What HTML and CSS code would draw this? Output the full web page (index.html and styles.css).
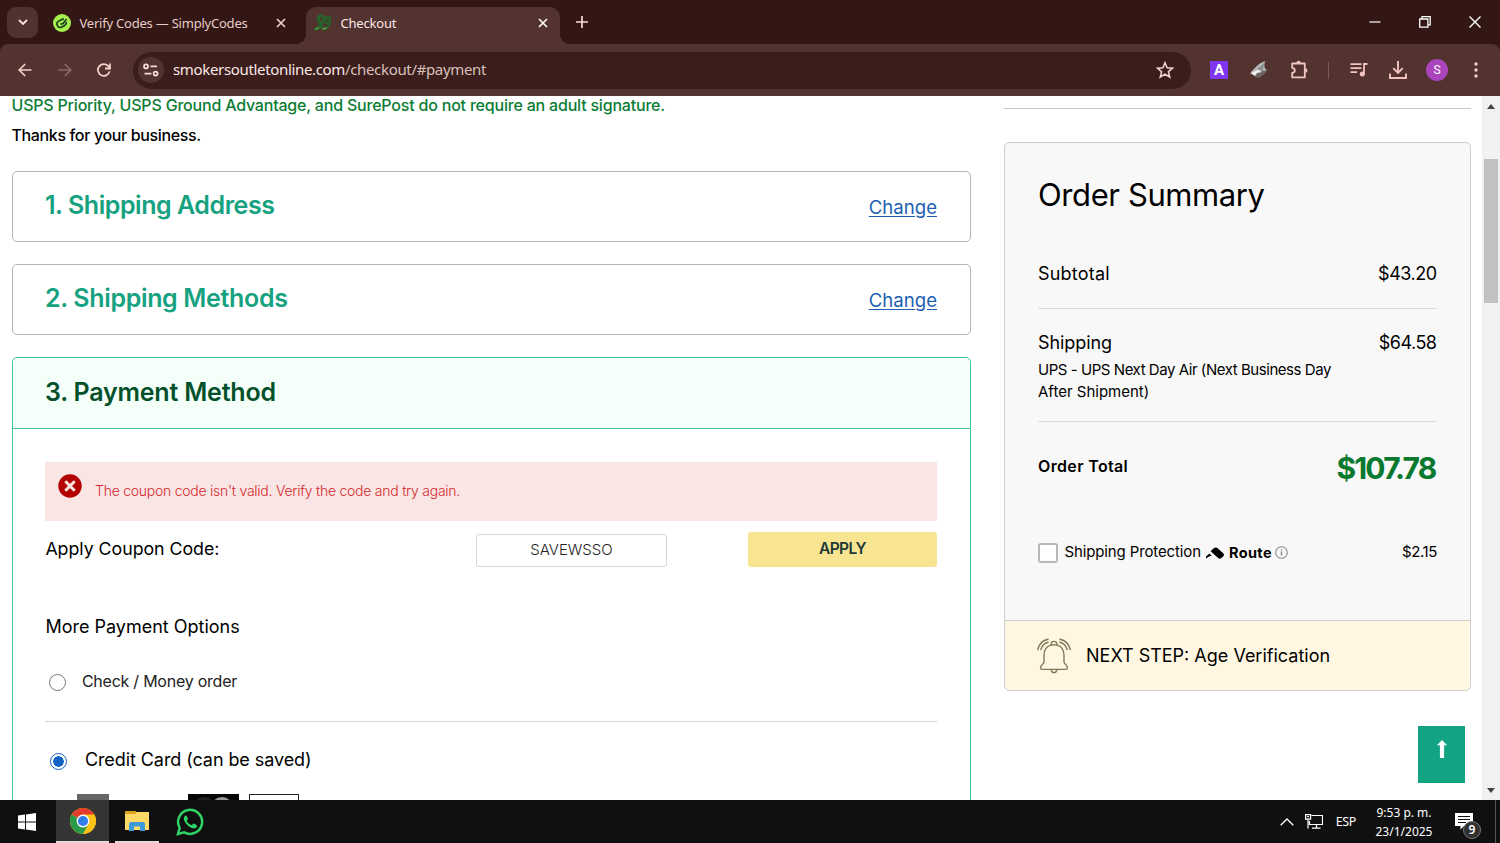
FILE: index.html
```html
<!DOCTYPE html>
<html lang="en">

<head>
  <meta charset="UTF-8" />
  <meta name="viewport" content="width=device-width, initial-scale=1.0" />
  <title>Checkout</title>
  <link rel="stylesheet" href="styles.css">
</head>

<body>

  <!-- Tabs -->
  <div class="tabstrip">
    <button class="tab-search">
      <svg width="12" height="12" viewBox="0 0 12 12"><path d="M2 4l4 4 4-4" fill="none" stroke="#fbe4e1" stroke-width="1.8" /></svg>
    </button>
    <div class="tab">
      <svg width="18" height="18" viewBox="0 0 18 18">
        <circle cx="9" cy="9" r="9" fill="#a6f04d" />
        <g transform="rotate(-28 9 9)" fill="none" stroke="#14391c" stroke-width="1.6">
          <path d="M12.500 6.500Q11.500 5.800 10 5.800H7a3.300 3.300 0 0 0 0 6.600h3.200a3.300 3.300 0 0 0 3-2.400" />
          <path d="M7 9l2.400 1L15 7.600" />
        </g>
      </svg>
      <span class="tab-title first-title">Verify Codes — SimplyCodes</span>
      <svg class="tab-close" width="10" height="10" viewBox="0 0 10 10"><path d="M1 1l8 8M9 1l-8 8" stroke="#f2d5d1" stroke-width="1.6" /></svg>
    </div>
    <div class="tab active">
      <svg width="18" height="18" viewBox="0 0 18 18" fill="none" stroke-linecap="round">
        <path d="M8 2C4 1 3 6 5.500 8s1 6-4 7" stroke="#22662a" stroke-width="3" />
        <path d="M10.500 3c-3 5-4 11-1 12s6.500-5 6.500-9-3-4-4-1 0 4 2 4" stroke="#275f2b" stroke-width="2.6" />
        <path d="M2 15l2-1M9 15l3-1" stroke="#5fa045" stroke-width="1.5" />
      </svg>
      <span class="tab-title">Checkout</span>
      <svg class="tab-close" width="10" height="10" viewBox="0 0 10 10"><path d="M1 1l8 8M9 1l-8 8" stroke="#fff" stroke-width="1.6" /></svg>
    </div>
    <svg class="new-tab" width="12" height="12" viewBox="0 0 12 12"><path d="M6 0v12M0 6h12" stroke="#f7d9d5" stroke-width="1.7" /></svg>
    <div class="window-controls">
      <svg width="12" height="12" viewBox="0 0 12 12"><path d="M0.5 6h11" stroke="#fff" stroke-width="1.2" /></svg>
      <svg width="12" height="12" viewBox="0 0 12 12" fill="none" stroke="#fff" stroke-width="1.3"><path d="M0.7 3h8.2v8.2H0.7zM3 3V0.7h8.2v8.2H9" /></svg>
      <svg width="12" height="12" viewBox="0 0 12 12"><path d="M0.5 0.5l11 11M11.5 0.5l-11 11" stroke="#fff" stroke-width="1.4" /></svg>
    </div>
  </div>

  <!-- Toolbar -->
  <div class="toolbar">
    <div class="nav-buttons">
      <svg width="14" height="14" viewBox="0 0 14 14" fill="none" stroke="#f4cfca" stroke-width="1.7"><path d="M13.5 7H1.5M7.2 1L1.2 7l6 6" /></svg>
      <svg width="14" height="14" viewBox="0 0 14 14" fill="none" stroke="#8c6a66" stroke-width="1.7"><path d="M0.5 7h12M6.8 1l6 6-6 6" /></svg>
      <svg width="14" height="14" viewBox="0 0 14 14" fill="none" stroke="#f4cfca" stroke-width="1.8"><path d="M12.6 8.4A5.9 5.9 0 1 1 11.6 3.4L12.6 4.8M13 0.5v5H8" /></svg>
    </div>
    <div class="address-bar">
      <span class="site-info">
        <svg width="16" height="14" viewBox="0 0 16 14" fill="none" stroke="#f6dcd8" stroke-width="1.7"><circle cx="3" cy="3.4" r="2" /><path d="M7.5 3.4H14M1.5 10.6h7" /><circle cx="12.6" cy="10.6" r="2" /></svg>
      </span>
      <span class="url">smokersoutletonline.com<span class="url-path">/checkout/#payment</span></span>
      <svg class="star" width="18" height="18" viewBox="0 0 18 18"><path d="M9 1.8l2.1 5 5.4.4-4.1 3.5 1.3 5.3L9 13.1 4.3 16l1.3-5.3-4.1-3.5 5.4-.4z" fill="none" stroke="#f0d3cf" stroke-width="1.6" /></svg>
    </div>
    <span class="ext-letter">A</span>
    <svg class="ext-shark" width="18" height="18" viewBox="0 0 18 18">
      <path d="M1 11C5 7 9 2 15 0c-1 4-1 8 2 9l-3 2z" fill="#b9bbba" />
      <path d="M7 8l7-6-1 8z" fill="#8b8e8d" />
      <path d="M4 12l6-2 7-.5-3 4-5 3.5-4-1z" fill="#6b6664" />
      <path d="M0 12l8-3 4 2-5 1-2 3z" fill="#eff0ee" />
    </svg>
    <svg class="puzzle" width="20" height="20" viewBox="0 0 20 20">
      <path d="M3.200 3.500h12.600v13.900H3.200v-4.500q2.600-.4 2.600-2.500T3.200 7.900z" fill="none" stroke="#f1c4bf" stroke-width="1.8" stroke-linejoin="round" />
      <path d="M7.400 3a2.200 2.200 0 0 1 4.400 0zM16.300 8.200a2.200 2.200 0 0 1 0 4.400z" fill="#f1c4bf" />
    </svg>
    <span class="divider"></span>
    <svg class="media" width="18" height="16" viewBox="0 0 18 16"><path d="M0.5 2.2h11M0.5 6.2h11M0.5 10.2h6.5M14 12.3V2h3.5" fill="none" stroke="#f1c4bf" stroke-width="1.8" /><circle cx="12.3" cy="12" r="2.5" fill="#f1c4bf" /></svg>
    <svg class="download" width="18" height="18" viewBox="0 0 18 18" fill="none" stroke="#f1c4bf" stroke-width="1.9"><path d="M9 0v12M4.2 7.2L9 12l4.8-4.8M1 12.5V17h16v-4.5" /></svg>
    <span class="avatar">S</span>
    <svg class="kebab" width="4" height="16" viewBox="0 0 4 16" fill="#f4cfca"><circle cx="2" cy="2" r="1.7" /><circle cx="2" cy="8" r="1.7" /><circle cx="2" cy="14" r="1.7" /></svg>
  </div>

  <!-- Page -->
  <div class="page">
    <div class="steps">
      <p class="notice">USPS Priority, USPS Ground Advantage, and SurePost do not require an adult signature.</p>
      <p class="thanks">Thanks for your business.</p>

      <div class="step">
        <div class="step-head">
          <h2 class="t-address">1. Shipping Address</h2>
          <a href="#">Change</a>
        </div>
      </div>

      <div class="step">
        <div class="step-head">
          <h2 class="t-methods">2. Shipping Methods</h2>
          <a href="#">Change</a>
        </div>
      </div>

      <div class="step current">
        <div class="step-head">
          <h2 class="t-payment">3. Payment Method</h2>
        </div>
        <div class="step-body">
          <div class="alert">
            <svg width="24" height="24" viewBox="0 0 24 24"><circle cx="12" cy="12" r="11.7" fill="#b30000" /><path d="M7.3 7.3l9.4 9.4M16.7 7.3l-9.4 9.4" stroke="#fae5e5" stroke-width="3" /></svg>
            <span>The coupon code isn't valid. Verify the code and try again.</span>
          </div>
          <div class="coupon">
            <label>Apply Coupon Code:</label>
            <input type="text" value="SAVEWSSO" />
            <button>APPLY</button>
          </div>
          <h3>More Payment Options</h3>
          <div class="option check">
            <span class="radio"></span>
            <span>Check / Money order</span>
          </div>
          <div class="option credit">
            <span class="radio checked"></span>
            <span>Credit Card (can be saved)</span>
          </div>
          <div class="cards">
            <span class="card-gray"></span>
            <svg class="card-circles" width="51" height="16" viewBox="0 0 51 16"><rect width="51" height="16" fill="#050505" /><circle cx="16" cy="14" r="11" fill="#222" /><circle cx="34" cy="14" r="11" fill="#9a9a9a" /></svg>
            <span class="card-outline"></span>
          </div>
        </div>
      </div>
    </div>

    <div class="side">
      <div class="summary">
        <h1>Order Summary</h1>
        <div class="row subtotal"><span>Subtotal</span><span class="price">$43.20</span></div>
        <div class="row shipping"><span>Shipping</span><span class="price">$64.58</span></div>
        <p class="carrier"><span class="line-one">UPS - UPS Next Day Air (Next Business Day</span><br>After Shipment)</p>
        <div class="row total"><span>Order Total</span><strong>$107.78</strong></div>
        <div class="row protection">
          <span class="checkbox"></span>
          <span class="label">Shipping Protection</span>
          <svg class="route-mark" width="18" height="12" viewBox="0 0 18 12"><path d="M0 11.500V9.500l3.400-3 2.300 2.200-2.700.9zM4.600 4.200L7.800 1.200Q9.200 0 11 .7l6 5.400q1.500 1.600.6 2.900l-2.400 2.200q-1.500.9-2.800 0z" /></svg>
          <b>Route</b>
          <svg class="info" width="13" height="13" viewBox="0 0 13 13" fill="none" stroke="#8c8c8c"><circle cx="6.5" cy="6.5" r="5.8" stroke-width="1.1" /><path d="M6.5 5.6v4M6.5 3.2v1.4" stroke-width="1.5" /></svg>
          <span class="fee">$2.15</span>
        </div>
        <div class="next-step">
          <svg width="34" height="36" viewBox="0 0 34 36" fill="none" stroke="#85775a" stroke-width="1.4" stroke-linecap="round" stroke-linejoin="round">
            <path d="M13.8 7.2C8.8 8.6 7 12.5 7 17.5v6.3c0 2.500-3.5 3-3.5 6 0 1 .6 1.6 1.5 1.6h24c.9 0 1.5-.6 1.500-1.6 0-3-3.5-3.5-3.500-6v-6.3c0-5-1.8-8.900-6.800-10.300-2-.6-4.400-.6-6.400 0z" />
            <path d="M14 7c0-4.800 6-4.800 6 0M14.2 31.6c.4 4 5.200 4 5.600 0" />
            <path d="M.7 11.500C2 6.500 6 2.200 11 1.200M3.800 11.500C5 8 7.600 5.200 11 4.300M33.300 11.500C32 6.500 28 2.200 23 1.200M30.200 11.500C29 8 26.400 5.200 23 4.300" />
          </svg>
          <span>NEXT STEP: Age Verification</span>
        </div>
      </div>
      <a class="to-top" href="#">
        <svg width="10" height="18" viewBox="0 0 10 18" fill="#fff"><path d="M5 0l5 5.3H7.1V18H2.9V5.3H0z" /></svg>
      </a>
    </div>

    <div class="scrollbar">
      <svg width="8" height="5" viewBox="0 0 8 5"><path d="M0 5l4-5 4 5z" fill="#444" /></svg>
      <span class="thumb"></span>
      <svg width="8" height="5" viewBox="0 0 8 5"><path d="M0 0l4 5 4-5z" fill="#444" /></svg>
    </div>
  </div>

  <!-- Taskbar -->
  <div class="taskbar">
    <div class="task start">
      <svg width="18" height="18" viewBox="0 0 18 18" fill="#fff"><path d="M0 2.500l7-.9v6.900H0zM8 1.400L18 0v8.500H8zM0 9.500h7v6.900l-7-.9zM8 9.500h10V18L8 16.600z" /></svg>
    </div>
    <div class="task chrome">
      <svg width="26" height="26" viewBox="0 0 26 26">
        <circle cx="13" cy="13" r="13" fill="#fbc116" />
        <path d="M13 13L1.75 6.5A13 13 0 0 1 24.25 6.5z" fill="#e33b2e" />
        <path d="M1.75 6.5A13 13 0 0 0 13 26l5.6-9.8L13 13z" fill="#2a9a48" />
        <path d="M13 6.5h11.25A13 13 0 0 1 13 26l5.63-9.75z" fill="#fbc116" />
        <circle cx="13" cy="13" r="6.4" fill="#fff" />
        <circle cx="13" cy="13" r="5.1" fill="#2f7de9" />
      </svg>
    </div>
    <div class="task files">
      <svg width="24" height="20" viewBox="0 0 24 20">
        <path d="M0 0h10l1.5 1H24v18H0z" fill="#ffd966" />
        <path d="M0 0h10l1.5 1.5L10 3H0z" fill="#dda01c" />
        <path d="M4 20v-7q0-2 2-2h12q2 0 2 2v7h-5v-4.5H9V20z" fill="#3c9ad8" />
      </svg>
    </div>
    <div class="task">
      <svg width="28" height="28" viewBox="0 0 28 28">
        <path d="M2 26l1.7-6.2A12 12 0 1 1 8.2 24.3z" fill="none" stroke="#2fd366" stroke-width="2.5" />
        <path d="M9.5 7.5c-2.5 1.5-2 4.5.5 8s6 5.5 9 4.8c2-.6 2.5-2.8 1.500-3.400l-2.700-1.400c-.7-.3-1.200 1.300-2 1.500-1.500.2-5-3-4.900-4.300.2-.8 1.300-1.200 1-2l-1.200-2.800c-.2-.4-.8-.6-1.200-.4z" fill="#2fd366" />
      </svg>
    </div>
    <div class="tray">
      <svg width="14" height="8" viewBox="0 0 14 8"><path d="M0.7 7.3L7 1l6.300 6.300" fill="none" stroke="#fff" stroke-width="1.3" /></svg>
      <svg class="network" width="18" height="15" viewBox="0 0 18 15" fill="none" stroke="#fff" stroke-width="1.2"><path d="M6.500 1.500h11v9h-13V7M11.500 10.500v3.500M7 14.200h8.500M.6.600h5v4.500h-5zM3 5v9.500" /><path d="M2.200 2.600h1.800" /></svg>
      <span class="lang">ESP</span>
      <div class="clock"><span>9:53 p. m.</span><span>23/1/2025</span></div>
      <div class="notifications">
        <svg width="18" height="17" viewBox="0 0 18 17"><path d="M0 0h18v13h-9l-3.500 3.500V13H0z" fill="#fff" /><path d="M3 3.500h12M3 6.500h12M3 9.500h8" stroke="#111" /></svg>
        <span class="badge">9</span>
      </div>
    </div>
  </div>

</body>

</html>
```

FILE: styles.css
```css
/* Reset */
* {
  margin: 0;
  padding: 0;
  box-sizing: border-box;
}

body {
  width: 1500px;
  height: 843px;
  overflow: hidden;
  font-family: Inter, sans-serif;
  color: #000;
  background: #fff;
}

svg {
  display: block;
  flex-shrink: 0;
}

button {
  border: none;
}

/* Browser tabs */
.tabstrip {
  display: flex;
  align-items: center;
  height: 44px;
  padding-left: 7px;
  background: #321714;
  font-family: "Noto Sans", sans-serif;
}

.tab-search {
  display: flex;
  align-items: center;
  justify-content: center;
  width: 31px;
  height: 31px;
  border-radius: 9px;
  background: #50322f;
}

.tab {
  display: flex;
  align-items: center;
  width: 254px;
  height: 37px;
  margin-top: 7px;
  padding: 0 12px 6px 8px;
}

.tab:not(.active) {
  width: 253px;
  margin-left: 7px;
}

.tab.active {
  position: relative;
  margin-left: 8px;
  background: #523330;
  border-radius: 10px 10px 0 0;
}

.tab.active::before,
.tab.active::after {
  content: "";
  position: absolute;
  bottom: 0;
  width: 10px;
  height: 10px;
}

.tab.active::before {
  left: -10px;
  background: radial-gradient(circle at 0 0, transparent 10px, #523330 10px);
}

.tab.active::after {
  right: -10px;
  background: radial-gradient(circle at 100% 0, transparent 10px, #523330 10px);
}

.tab-title {
  flex: 1;
  margin-left: 8.5px;
  font-size: 13px;
  letter-spacing: -0.2px;
  color: #fbe9e7;
  white-space: nowrap;
}

.first-title {
  letter-spacing: -0.22px;
  color: #e6ccc9;
}

.new-tab {
  margin-left: 16px;
}

.window-controls {
  display: flex;
  gap: 38px;
  margin-left: auto;
  padding-right: 19px;
}

/* Browser toolbar */
.toolbar {
  display: flex;
  align-items: center;
  height: 52px;
  background: #523330;
  border-radius: 8px 8px 0 0;
  box-shadow: 0 -8px 0 #321714;
  font-family: "Noto Sans", sans-serif;
}

.nav-buttons {
  display: flex;
  gap: 25.5px;
  padding: 0 22px 0 18px;
}

.address-bar {
  display: flex;
  align-items: center;
  width: 1058px;
  height: 37px;
  padding: 0 17.5px 0 5px;
  border-radius: 19px;
  background: #3b1e1b;
}

.site-info {
  display: flex;
  align-items: center;
  justify-content: center;
  width: 26px;
  height: 26px;
  border-radius: 50%;
  background: #523330;
}

.url {
  margin-left: 9px;
  padding-bottom: 2px;
  font-size: 15px;
  letter-spacing: -0.34px;
  color: #fbe9e7;
}

.url-path {
  color: #d9c0bd;
}

.star {
  margin-left: auto;
}

.ext-letter {
  width: 18px;
  height: 18px;
  margin-left: 19px;
  background: #8035f3;
  color: #fff;
  font: bold 15px/18px Roboto, sans-serif;
  text-align: center;
}

.ext-shark {
  margin-left: 22px;
}

.puzzle {
  margin-left: 21px;
}

.divider {
  width: 1px;
  height: 17px;
  margin-left: 19px;
  background: #7f5955;
}

.media {
  margin-left: 21px;
}

.download {
  margin-left: 20.5px;
}

.avatar {
  width: 22px;
  height: 22px;
  margin-left: 19.5px;
  border-radius: 50%;
  background: #aa45bd;
  color: #fff;
  font: 12px/22px Roboto, sans-serif;
  text-align: center;
}

.kebab {
  margin-left: 26px;
}

/* Page */
.page {
  display: flex;
  height: 704px;
  overflow: hidden;
}

.steps {
  width: 959px;
  margin-left: 12px;
}

.notice,
.thanks {
  margin-left: -0.5px;
  font-size: 16px;
  font-weight: 500;
  line-height: 20px;
  white-space: nowrap;
}

.notice {
  margin-top: -1px;
  letter-spacing: -0.2px;
  color: #0c7d34;
}

.thanks {
  margin-top: 10px;
  margin-bottom: 26px;
  letter-spacing: -0.36px;
}

.step {
  margin-bottom: 22px;
  border: 1px solid #b5b5b5;
  border-radius: 5px;
}

.step-head {
  display: flex;
  align-items: center;
  justify-content: space-between;
  height: 69px;
  padding: 0 33px 3px 32px;
}

.step-head h2 {
  font-size: 25px;
  font-weight: 600;
  line-height: 30px;
  color: #16a280;
}

.step-head .t-address {
  letter-spacing: -0.45px;
}

.step-head .t-methods {
  letter-spacing: -0.34px;
}

.step-head .t-payment {
  letter-spacing: -0.2px;
}

.step-head a {
  padding-top: 4px;
  font-size: 18.6px;
  color: #1c5fb0;
  text-underline-offset: 2px;
}

.step.current {
  height: 600px;
  border-color: #3fc4a1;
}

.step.current .step-head {
  height: 71px;
  padding-bottom: 2px;
  border-bottom: 1px solid #3fc4a1;
  border-radius: 5px 5px 0 0;
  background: #f4fffa;
}

.step.current h2 {
  color: #03512a;
}

.step-body {
  padding: 33px 33px 0 32.4px;
}

.alert {
  display: flex;
  height: 59px;
  padding: 11.5px 12.6px;
  background: #fae5e5;
  color: #d3292b;
  font-size: 14px;
  font-weight: 300;
}

.alert span {
  margin-left: 13px;
  line-height: 34px;
  letter-spacing: -0.25px;
}

.coupon {
  display: flex;
  align-items: center;
  height: 35px;
  margin-top: 11px;
}

.coupon label {
  width: 430.6px;
  padding-bottom: 2px;
  font-size: 17.8px;
  line-height: 33px;
  letter-spacing: -0.04px;
}

.coupon input {
  width: 191px;
  height: 33px;
  margin-top: 2px;
  padding-bottom: 2px;
  border: 1px solid #d5d5d5;
  border-radius: 3px;
  color: #222;
  font: 300 15px Inter, sans-serif;
  text-align: center;
}

.coupon button {
  width: 189px;
  height: 35px;
  margin-left: auto;
  padding-bottom: 2px;
  border-radius: 3px;
  background: #f7e592;
  color: #223a36;
  font: 600 15.5px Inter, sans-serif;
  letter-spacing: -0.6px;
}

.step-body h3 {
  margin-top: 49px;
  font-size: 18px;
  font-weight: 400;
  line-height: 22px;
}

.option {
  display: flex;
  align-items: center;
}

.option .radio {
  width: 17px;
  height: 17px;
  margin-top: 3px;
  border: 1px solid #767676;
  border-radius: 50%;
}

.option .radio.checked {
  border-color: #1463c4;
  background: radial-gradient(circle, #1463c4 5px, #fff 5.5px);
}

.option.check {
  height: 84px;
  padding: 2px 3.5px 0;
  border-bottom: 1px solid #d6d6d6;
  font-size: 16px;
  letter-spacing: -0.24px;
  color: #222;
}

.option.check span + span {
  margin-left: 16px;
}

.option.credit {
  height: 72px;
  padding: 4px 4.5px 0;
  font-size: 18px;
  letter-spacing: -0.08px;
}

.option.credit span + span {
  margin: -2px 0 0 18px;
}

.cards {
  display: flex;
}

.card-gray {
  width: 32px;
  height: 16px;
  margin-left: 32px;
  background: #666;
}

.card-circles {
  margin-left: 79px;
}

.card-outline {
  width: 50px;
  height: 16px;
  margin-left: 10px;
  border: 1px solid #222;
}

/* Order summary */
.side {
  width: 467px;
  margin-left: 33px;
  padding-top: 12px;
}

.side::before {
  content: "";
  display: block;
  height: 1px;
  margin-bottom: 33px;
  background: #ccc8c1;
}

.summary {
  border: 1px solid #cfcfcf;
  border-radius: 5px;
  background: #f8f8f8;
}

.summary h1 {
  padding: 32px 33px 0;
  font-size: 31px;
  font-weight: 400;
  line-height: 40px;
  letter-spacing: -0.4px;
}

.row {
  display: flex;
  align-items: center;
  justify-content: space-between;
  margin: 0 33px;
  font-size: 18px;
}

.price {
  margin-right: 0.5px;
  letter-spacing: -0.5px;
}

.subtotal {
  height: 94px;
  padding-top: 23px;
  border-bottom: 1px solid #dcdcd4;
}

.subtotal span:first-child {
  letter-spacing: 0.2px;
}

.shipping {
  height: 49px;
  padding-top: 18px;
}

.shipping span:first-child {
  letter-spacing: -0.08px;
}

.carrier {
  height: 64px;
  margin: 0 33px;
  padding-top: 1px;
  font-size: 15px;
  line-height: 22px;
  border-bottom: 1px solid #dcdcd4;
  white-space: nowrap;
}

.line-one {
  letter-spacing: -0.45px;
}

.total {
  height: 94px;
  font-size: 16px;
  font-weight: 600;
}

.total span {
  margin-top: -7px;
  letter-spacing: 0.35px;
}

.total strong {
  margin: -2px 1.5px 0 0;
  font-size: 30px;
  font-weight: 700;
  letter-spacing: -1.8px;
  color: #08792f;
}

.protection {
  justify-content: flex-start;
  height: 73px;
  padding-bottom: 2px;
  font-size: 15px;
}

.checkbox {
  width: 20px;
  height: 20px;
  margin-top: 2px;
  border: 2px solid #b8b8b8;
  border-radius: 3px;
  background: #fff;
}

.protection .label {
  margin-left: 6.5px;
  letter-spacing: -0.13px;
  white-space: nowrap;
}

.route-mark {
  margin: 2px 0 0 5px;
}

.protection b {
  margin: 2px 0 0 5px;
  font-size: 14.5px;
  letter-spacing: 0.4px;
}

.info {
  margin: 2px 0 0 3px;
}

.fee {
  margin-left: auto;
  letter-spacing: -0.4px;
}

.next-step {
  display: flex;
  align-items: center;
  height: 70px;
  margin-top: 31px;
  padding-left: 32px;
  border-top: 1px solid #cfcfcf;
  border-radius: 0 0 5px 5px;
  background: #fff7e1;
  font-size: 18px;
}

.next-step span {
  margin: -1px 0 0 15px;
  white-space: nowrap;
}

.to-top {
  display: flex;
  justify-content: center;
  width: 47px;
  height: 57px;
  margin: 35px 6px 0 auto;
  padding-top: 14px;
  background: #12a482;
}

/* Scrollbar */
.scrollbar {
  display: flex;
  flex-direction: column;
  align-items: center;
  justify-content: space-between;
  width: 18px;
  margin-left: auto;
  padding: 8px 0 7px;
  background: #f1f1f1;
}

.scrollbar .thumb {
  width: 14px;
  height: 144px;
  margin: 50px 0 auto;
  background: #c1c1c1;
}

/* Taskbar */
.taskbar {
  display: flex;
  height: 43px;
  background: #101010;
  color: #fff;
  font-family: "Noto Sans", sans-serif;
}

.task {
  display: flex;
  align-items: center;
  justify-content: center;
  width: 54px;
}

.task.start {
  width: 56px;
  padding-right: 2px;
}

.task.chrome {
  width: 53px;
  background: #343434;
  border-bottom: 2px solid #e5d8d6;
}

.task.files {
  width: 44px;
  margin: 0 4px 0 6px;
  padding: 1px 1px 0 0;
  border-bottom: 2px solid #e5d8d6;
}

.tray {
  display: flex;
  align-items: center;
  margin-left: auto;
  font-size: 12px;
}

.network {
  margin-left: 11px;
}

.lang {
  margin-left: 13px;
  font-size: 12.5px;
  letter-spacing: -0.4px;
}

.clock {
  display: flex;
  flex-direction: column;
  width: 60px;
  margin-left: 18px;
  line-height: 19px;
  text-align: center;
  white-space: nowrap;
}

.notifications {
  position: relative;
  margin-left: 21px;
  padding: 13px 22px 13px 0;
  border-right: 1px solid #555;
  margin-right: 4px;
}

.badge {
  position: absolute;
  top: 21px;
  left: 8px;
  width: 18px;
  height: 18px;
  border: 1px solid #777;
  border-radius: 50%;
  background: #303030;
  font-size: 12px;
  font-weight: 600;
  line-height: 16px;
  text-align: center;
}
```
